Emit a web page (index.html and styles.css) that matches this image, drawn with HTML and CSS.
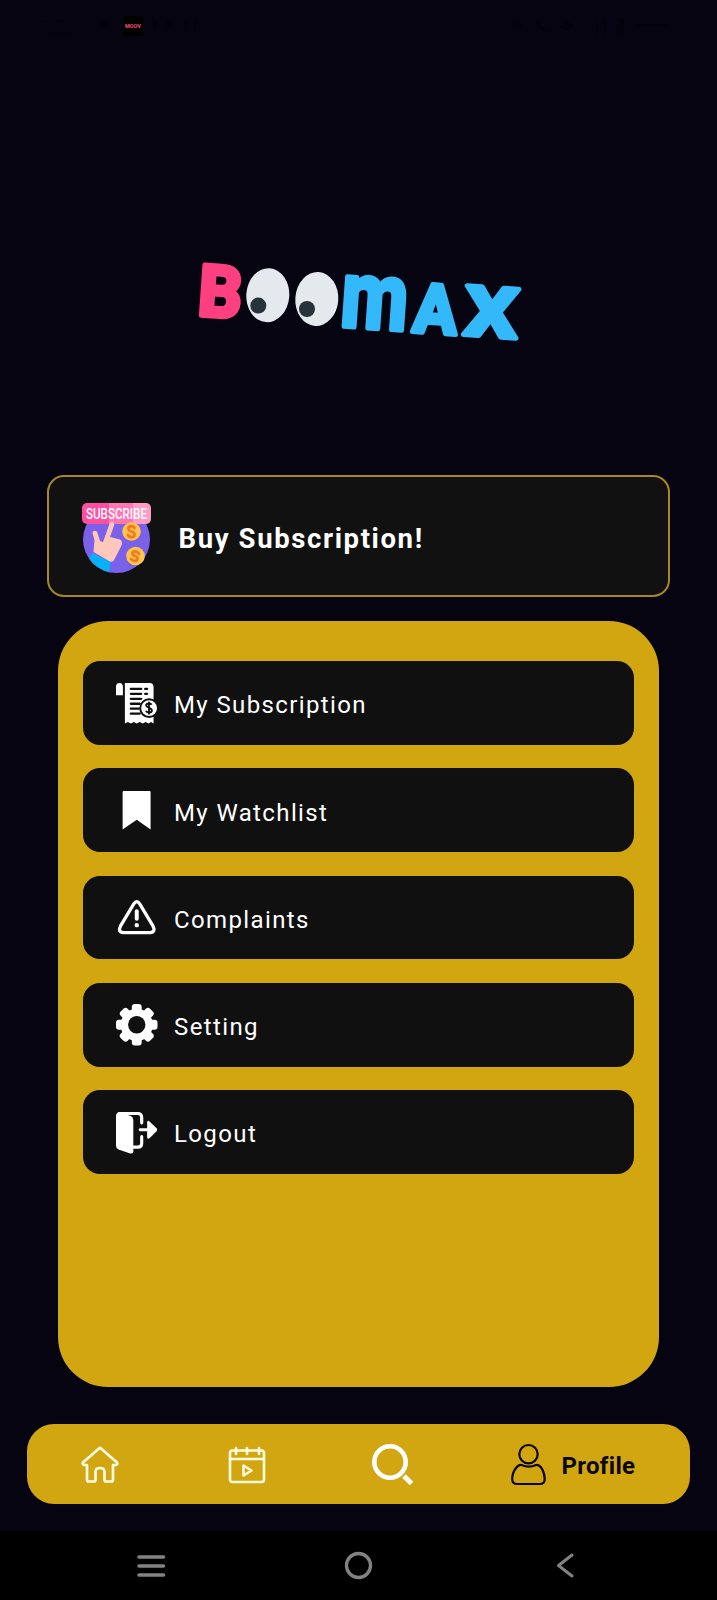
FILE: index.html
```html
<!DOCTYPE html>
<html lang="en">
<head>
<meta charset="utf-8">
<title>Boomax</title>
<link rel="stylesheet" href="styles.css">
</head>
<body>
<div class="screen">
  <header class="status">
    <svg width="717" height="60" viewBox="0 0 717 60">
      <g fill="#04020b">
        <path d="M42 21h10v1H42zM56 20h8v2h-8zM67 21h10v1H67zM42 33h34v1H42z"/>
        <circle cx="104" cy="25" r="4"/>
        <path d="M153 20h4v10h-4zM166 20h6v10h-6zM184 20h3v11h-3zM194 19h3v13h-3zM512 22h10v7h-10zM535 19h3l4 8h10v4h-12zM560 26l7-5 7 5-7 4zM595 22h3v12h-3zM603 19h3v15h-3zM618 19h6v15h-6zM636 24h32v3h-32z"/>
      </g>
      <rect x="123" y="16" width="20" height="20" rx="2" fill="#000"/>
      <text class="app-badge" x="125" y="28" textLength="16" lengthAdjust="spacingAndGlyphs">MOOV</text>
    </svg>
  </header>
  <div class="brand">
    <svg width="340" height="100" viewBox="0 0 340 100" role="img" aria-label="Boomax">
      <text class="letter pink" transform="translate(7 65) rotate(4) scale(.960 1)" font-size="71">B</text>
      <g fill="#e4e9ee">
        <ellipse cx="77.8" cy="45.2" rx="21.5" ry="27" transform="rotate(4 78 45)"/>
        <ellipse cx="126.8" cy="49" rx="21.5" ry="27" transform="rotate(4 127 49)"/>
      </g>
      <g fill="#273338"><circle cx="68.3" cy="55.6" r="8"/><circle cx="117" cy="59" r="8"/></g>
      <text class="letter blue" transform="translate(149.500 76) rotate(4) scale(.820 1)" font-size="94">m</text>
      <text class="letter blue" transform="translate(222 81.500) rotate(4) scale(.960 1)" font-size="68">A</text>
      <text class="letter blue" transform="translate(273 84.500) rotate(4) scale(1.220 1)" font-size="69">X</text>
    </svg>
  </div>
  <a class="buy">
    <svg width="70" height="72" viewBox="0 0 70 72">
      <defs><clipPath id="disc"><circle cx="34.500" cy="36.500" r="33.500"/></clipPath></defs>
      <circle cx="34.500" cy="36.500" r="33.500" fill="#7b61ea"/>
      <g clip-path="url(#disc)"><path d="M10 50l19 9-3 14H0z" fill="#08b1f8"/></g>
      <path d="M0 5a5 5 0 0 1 5-5h22l22 21H5a5 5 0 0 1-5-5z" fill="#ff4fa0"/>
      <path d="M27 0h25v21H27z" fill="#ff76b4"/>
      <path d="M51 0h13a5 5 0 0 1 5 5v11a5 5 0 0 1-5 5H51z" fill="#ff9cc6"/>
      <path d="M11.500 49l1-12-1.500-5-.5-2c0-3 4.500-3 5 0l2.500 8 3 1 6.500-18c1.500-4 6-2.500 4.500 1.500L28 34l10 2.500c2 1 2.500 4 1.500 6L32 57c-1 2-3 2-5 1z" fill="#ffc8ba"/>
      <circle cx="49.500" cy="28.500" r="9.300" fill="#ffc34f"/><circle cx="53.500" cy="53" r="9.300" fill="#ffc34f"/>
      <g fill="none" stroke="#f47a20" stroke-width="2.800" stroke-linecap="round"><path d="M52.500 25c-1-3-6.500-2-6 1s6 2 6 5.500-5 3.500-6.500.5"/><path d="M57 51c-1-3-6.500-4-6.500-.5s5.500 1.500 5 5-5 2.500-6.500.5"/></g>
      <text class="sub-tag" x="4" y="16" textLength="61" lengthAdjust="spacingAndGlyphs">SUBSCRIBE</text>
    </svg>
    <span>Buy Subscription!</span>
  </a>
  <main class="panel">
    <a class="row">
      <svg class="icon" viewBox="0 0 42 42">
        <path d="M0 12.500V4q0-4 3.500-4T7 4v8.500zM9 0h25q4 0 4 4v37l-2.500-1.500-2.500 1.500-3-1.500-3 1.500-3-1.500-3 1.500-3-1.500-3 1.500-3-1.500L9 41z" fill="#fff"/>
        <path d="M15 6h10.500M15 11h10.500M15 16h10.500M15 21h9M15 26h8M15 31h9M29.500 6h2M29.500 11h2" stroke="#101010" stroke-width="2.300" stroke-linecap="round"/>
        <circle cx="33.500" cy="25.500" r="9" fill="#fff" stroke="#101010" stroke-width="2"/>
        <path d="M36 22c-1-2-5.500-1.500-5.500.8s5.800 2.200 5.800 5-5 2.700-6 .5M33.400 19v13" fill="none" stroke="#101010" stroke-width="1.900"/>
      </svg>
      <span>My Subscription</span>
    </a>
    <a class="row">
      <svg class="icon" viewBox="0 0 42 42"><path d="M8 1h26q1 0 1 1v38L21 30 6.700 40V2q0-1 1.300-1z" fill="#fff"/></svg>
      <span>My Watchlist</span>
    </a>
    <a class="row">
      <svg class="icon" viewBox="0 0 42 42" fill="none" stroke="#fff" stroke-linecap="round">
        <path d="M18 7q3-4.500 6 0l13.500 22.500q3 6-3 6.500h-27q-6-.5-3-6.500z" stroke-width="3.300"/>
        <path d="M21 14.500v7.500" stroke-width="4"/><circle cx="21" cy="28.500" r="1.200" stroke-width="2"/>
      </svg>
      <span>Complaints</span>
    </a>
    <a class="row">
      <svg class="icon" viewBox="0 0 42 42">
        <g fill="#fff"><rect x="16" y="0" width="10" height="42" rx="3"/><rect x="16" y="0" width="10" height="42" rx="3" transform="rotate(45 21 21)"/><rect x="16" y="0" width="10" height="42" rx="3" transform="rotate(90 21 21)"/><rect x="16" y="0" width="10" height="42" rx="3" transform="rotate(135 21 21)"/><circle cx="21" cy="21" r="16.300"/></g>
        <circle cx="21" cy="21" r="8.800" fill="#101010"/>
      </svg>
      <span>Setting</span>
    </a>
    <a class="row">
      <svg class="icon" viewBox="0 0 42 42">
        <path d="M4 1.500h18q4 0 4 4V11M26 25v6.500q0 4-4 4h-4" fill="none" stroke="#fff" stroke-width="3.200" stroke-linecap="round"/>
        <path d="M3 0l12 4q2.500 1 2.500 4v32q0 2.500-3 2L2.500 38Q0 37 0 34V4q0-3 3-4z" fill="#fff"/>
        <path d="M24.500 18H34" stroke="#fff" stroke-width="3" stroke-linecap="round"/>
        <path d="M31.500 11q0-3.500 3-1l6.500 6.500q1.300 1.500 0 3l-6.500 6.500q-3 2.500-3-1z" fill="#fff"/>
      </svg>
      <span>Logout</span>
    </a>
  </main>
  <nav class="tabs">
    <svg class="home" width="38" height="38" viewBox="0 0 38 38" fill="none" stroke="#fffbe0" stroke-width="2.700" stroke-linejoin="round">
      <path d="M18 3.500q1-1 2 0l15.500 13.500q2 2-.5 3h-3V34.500q0 2-2 2h-5q-1.500 0-1.500-2V27q0-4-4.500-4t-4.500 4v7.500q0 2-1.500 2H8q-2 0-2-2V20H3q-2.500-1-.5-3z"/>
    </svg>
    <svg class="cal" width="38" height="38" viewBox="0 0 38 38" fill="none" stroke="#fffbe0" stroke-width="2.600" stroke-linecap="round" stroke-linejoin="round">
      <rect x="2" y="5.500" width="34" height="31.500" rx="2.500"/><path d="M2 14h34M8 3v6M19 3v6M31 3v6M15.500 20.500v10l8-5z"/>
    </svg>
    <svg class="find" width="42" height="42" viewBox="0 0 42 42" fill="none" stroke="#fff">
      <circle cx="18" cy="19" r="15.700" stroke-width="4.600"/><path d="M32 33l7.500 7.500" stroke-width="5"/>
    </svg>
    <a class="profile">
      <svg width="36" height="42" viewBox="0 0 36 42" fill="none" stroke="#090600" stroke-width="2.200">
        <circle cx="17.500" cy="11.200" r="9.200"/>
        <path d="M10.500 22q-3-.5-5.500 3-3.800 5-3.800 11 0 5 5 5h22.500q5 0 5-5 0-6-3.200-11-2.500-3.500-5.500-3-7.200 3.200-14.500 0z"/>
      </svg>
      <span>Profile</span>
    </a>
  </nav>
  <footer class="system">
    <svg width="717" height="69" viewBox="0 0 717 69" fill="none" stroke="#828282" stroke-width="3.600" stroke-linecap="round" stroke-linejoin="round">
      <path d="M139 26h24.500M139 35h24.500M139 44h24.500"/>
      <circle cx="358.500" cy="34.500" r="12" stroke-width="3.300"/>
      <path d="M572 24l-13.500 10.500 13.500 10.500" stroke-width="3"/>
    </svg>
  </footer>
</div>
</body>
</html>
```
FILE: styles.css
```css
* { box-sizing: border-box; }
body { margin: 0; background: #060411; font-family: Roboto, sans-serif; }
svg { display: block; flex: none; overflow: visible; }
.screen { width: 717px; height: 1600px; display: flex; flex-direction: column; overflow: hidden; }
.status { height: 250px; }
.app-badge { font: 900 5px Roboto, sans-serif; fill: #e0406e; }
.brand { height: 225px; padding-left: 190px; }
.letter { font-family: Roboto, sans-serif; font-weight: 700; stroke-width: 5px; stroke-linejoin: round; }
.pink { fill: #ff4080; stroke: #ff4080; }
.blue { fill: #33b8fa; stroke: #33b8fa; }
.buy {
  height: 122px; margin: 0 47px; padding: 3px 0 0 33px;
  display: flex; align-items: center; gap: 26.5px;
  border: 2px solid #a9852a; border-radius: 17px; background: #101110;
  color: #fff; font-size: 27.5px; font-weight: 700; letter-spacing: 1.62px;
}
.buy svg { position: relative; top: 1px; }
.buy span { padding-top: 2px; }
.sub-tag { font: 500 14px Roboto, sans-serif; fill: #fff; letter-spacing: 0; }
.panel {
  height: 766px; margin: 24px 58px 0 58px; padding: 40px 25px;
  display: flex; flex-direction: column; gap: 23.6px;
  border-radius: 50px; background: #d2a611;
}
.row {
  height: 83.7px; padding: 1px 0 0 33px; flex: none;
  display: flex; align-items: center; gap: 16.5px;
  border-radius: 17px; background: #101010;
  color: #fff; font-size: 24px; letter-spacing: 1.38px;
}
.row span { padding-top: 4px; }
.icon { width: 41.5px; height: 41.5px; }
.tabs {
  height: 80px; margin: 37px 27px 0 26.5px; padding-left: 54.5px;
  display: flex; align-items: center;
  border-radius: 27px; background: #d2a611;
}
.cal { margin-left: 108.5px; }
.find { margin-left: 106px; }
.profile { display: flex; align-items: center; gap: 15px; margin-left: 97px; color: #090600; font-size: 24px; font-weight: 700; letter-spacing: .3px; }
.profile span { padding-top: 3px; }
.system { height: 69px; margin-top: 27px; background: #000; }
```
